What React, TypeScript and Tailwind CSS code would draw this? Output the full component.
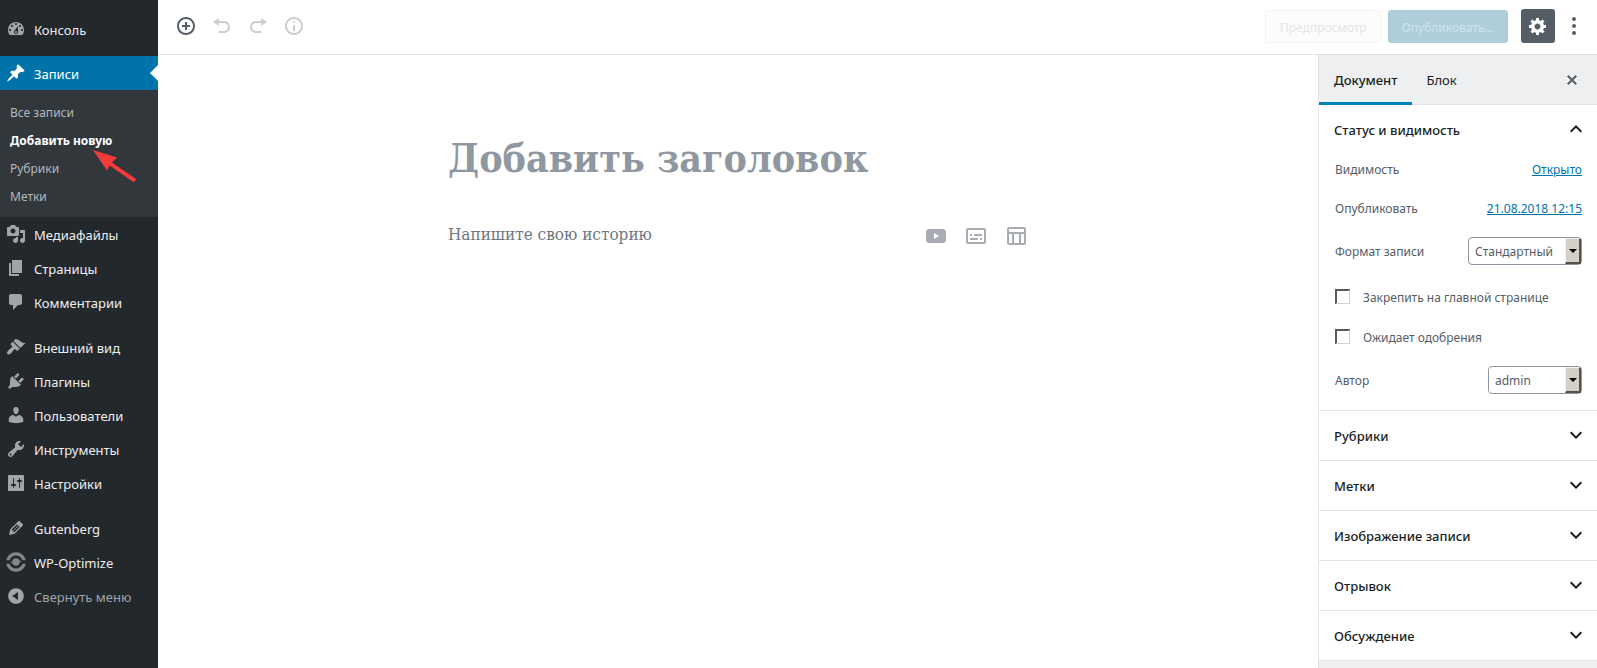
import type { ReactNode } from "react";

type IconProps = { d: string; className?: string; box?: number };

function Icon({ d, className = "size-5", box = 20 }: IconProps) {
  return (
    <svg viewBox={`0 0 ${box} ${box}`} className={`shrink-0 ${className}`} fill="currentColor" fillRule="evenodd" aria-hidden="true">
      <path d={d} />
    </svg>
  );
}

const icons = {
  dashboard:
    "M3.76 16h12.48c1.1-1.37 1.76-3.11 1.76-5 0-4.42-3.58-8-8-8s-8 3.58-8 8c0 1.89.66 3.63 1.76 5zM10 4c.55 0 1 .45 1 1s-.45 1-1 1-1-.45-1-1 .45-1 1-1zM6 6c.55 0 1 .45 1 1s-.45 1-1 1-1-.45-1-1 .45-1 1-1zm8 0c.55 0 1 .45 1 1s-.45 1-1 1-1-.45-1-1 .45-1 1-1zm-5.37 5.55L12 7v6c0 1.1-.9 2-2 2s-2-.9-2-2c0-.57.24-1.08.63-1.45zM4 10c.55 0 1 .45 1 1s-.45 1-1 1-1-.45-1-1 .45-1 1-1zm12 0c.55 0 1 .45 1 1s-.45 1-1 1-1-.45-1-1 .45-1 1-1zm-5 3c0-.55-.45-1-1-1s-1 .45-1 1 .45 1 1 1 1-.45 1-1z",
  post: "M10.44 3.02l1.82-1.82 6.36 6.35-1.83 1.82c-1.05-.68-2.48-.57-3.41.36l-.75.75c-.92.93-1.04 2.35-.35 3.41l-1.83 1.82-2.41-2.41-2.8 2.79c-.42.42-3.38 2.71-3.8 2.29s1.86-3.39 2.28-3.81l2.79-2.79L4.1 9.36l1.83-1.82c1.05.69 2.48.57 3.4-.36l.75-.75c.93-.92 1.05-2.35.36-3.41z",
  media:
    "M13 11V4c0-.55-.45-1-1-1h-1.67L9 1H5L3.67 3H2c-.55 0-1 .45-1 1v7c0 .55.45 1 1 1h10c.55 0 1-.45 1-1zM7 4.5c1.38 0 2.5 1.12 2.5 2.5S8.38 9.5 7 9.5 4.5 8.38 4.5 7 5.62 4.5 7 4.5zM14 6h5v10.5c0 1.38-1.12 2.5-2.5 2.5S14 17.88 14 16.5s1.12-2.5 2.5-2.5c.17 0 .34.02.5.05V9h-3V6zm-4 8.05V13h2v3.5c0 1.38-1.12 2.5-2.5 2.5S7 17.88 7 16.5 8.12 14 9.5 14c.17 0 .34.02.5.05z",
  page: "M6 15V2h10v13H6zm-1 1h8v2H3V5h2v11z",
  comments: "M5 2h9c1.1 0 2 .9 2 2v7c0 1.1-.9 2-2 2h-2l-5 5v-5H5c-1.1 0-2-.9-2-2V4c0-1.1.9-2 2-2z",
  appearance:
    "M14.48 11.06L7.41 3.99l1.5-1.5c.5-.56 2.3-.47 3.51.32 1.21.8 1.43 1.28 2.91 2.1 1.18.64 2.45 1.26 4.45.85zm-.71.71L6.7 4.7 4.93 6.47c-.39.39-.39 1.02 0 1.41l1.06 1.06c.39.39.39 1.03 0 1.42-.6.6-1.43 1.11-2.21 1.69-.35.26-.7.53-1.01.84C1.43 14.23.4 16.08 1.4 17.07c.99 1 2.84-.03 4.18-1.36.31-.31.58-.66.85-1.02.57-.78 1.08-1.61 1.69-2.21.39-.39 1.02-.39 1.41 0l1.06 1.06c.39.39 1.02.39 1.41 0z",
  plugins:
    "M13.11 4.36L9.87 7.6 8 5.73l3.24-3.24c.35-.34 1.05-.2 1.56.32.52.51.66 1.21.31 1.55zm-8 1.77l.91-1.12 9.01 9.01-1.19.84c-.71.71-2.63 1.16-3.82 1.16H6.14L4.9 17.26c-.59.59-1.54.59-2.12 0-.59-.58-.59-1.53 0-2.12l1.24-1.24v-3.88c0-1.13.4-3.19 1.09-3.89zm7.26 3.97l3.24-3.24c.34-.35 1.04-.21 1.55.31.52.51.66 1.21.31 1.55l-3.24 3.25z",
  users:
    "M10 9.25c-2.27 0-2.73-3.44-2.73-3.44C7 4.02 7.82 2 9.97 2c2.16 0 2.98 2.02 2.71 3.81 0 0-.41 3.44-2.68 3.44zm0 2.57L12.72 10c2.39 0 4.52 2.33 4.52 4.53v2.49s-3.65 1.13-7.24 1.13c-3.65 0-7.24-1.13-7.24-1.13v-2.49c0-2.25 1.94-4.48 4.47-4.48z",
  tools:
    "M16.68 9.77c-1.34 1.34-3.3 1.67-4.95.99l-5.41 6.52c-.99.99-2.59.99-3.58 0s-.99-2.59 0-3.57l6.52-5.42c-.68-1.65-.35-3.61.99-4.95 1.28-1.28 3.12-1.62 4.72-1.06l-2.89 2.89 2.82 2.82 2.86-2.87c.53 1.58.18 3.39-1.08 4.65zM3.81 16.21c.4.39 1.04.39 1.43 0 .4-.4.4-1.04 0-1.43-.39-.4-1.03-.4-1.43 0-.39.39-.39 1.03 0 1.43z",
  settings:
    "M18 17V3c0-.55-.45-1-1-1H3c-.55 0-1 .45-1 1v14c0 .55.45 1 1 1h14c.55 0 1-.45 1-1zM8 11h1c.55 0 1 .45 1 1s-.45 1-1 1H8v1.5c0 .28-.22.5-.5.5s-.5-.22-.5-.5V13H6c-.55 0-1-.45-1-1s.45-1 1-1h1V5.5c0-.28.22-.5.5-.5s.5.22.5.5V11zm5-2h-1c-.55 0-1-.45-1-1s.45-1 1-1h1V5.5c0-.28.22-.5.5-.5s.5.22.5.5V7h1c.55 0 1 .45 1 1s-.45 1-1 1h-1v5.5c0 .28-.22.5-.5.5s-.5-.22-.5-.5V9z",
  edit: "M13.89 3.39l2.71 2.72c.46.46.42 1.24.03 1.64l-8.01 8.02-5.56 1.16 1.16-5.58s7.6-7.63 7.99-8.03c.39-.39 1.22-.39 1.68.07zm-2.73 2.79l-5.59 5.61 1.11 1.11 5.54-5.65zm-2.97 8.23l5.58-5.6-1.07-1.08-5.59 5.6z",
  collapse:
    "M10 2.16c4.33 0 7.84 3.51 7.84 7.84s-3.51 7.84-7.84 7.84S2.16 14.33 2.16 10 5.71 2.16 10 2.16zm2 11.72V6.12L6.18 9.97z",
  insert:
    "M10 1c-5 0-9 4-9 9s4 9 9 9 9-4 9-9-4-9-9-9zm0 16c-3.9 0-7-3.1-7-7s3.1-7 7-7 7 3.1 7 7-3.1 7-7 7zm1-11H9v3H6v2h3v3h2v-3h3V9h-3V6z",
  undo: "M12 5H7V2L1 6l6 4V7h5c2.2 0 4 1.8 4 4s-1.8 4-4 4H7v2h5c3.3 0 6-2.7 6-6s-2.7-6-6-6z",
  redo: "M8 5h5V2l6 4-6 4V7H8c-2.2 0-4 1.8-4 4s1.8 4 4 4h5v2H8c-3.3 0-6-2.7-6-6s2.7-6 6-6z",
  info: "M9 15h2V9H9v6zm1-10c-.5 0-1 .5-1 1s.5 1 1 1 1-.5 1-1-.5-1-1-1zm0-4c-5 0-9 4-9 9s4 9 9 9 9-4 9-9-4-9-9-9zm0 16c-3.9 0-7-3.1-7-7s3.1-7 7-7 7 3.1 7 7-3.1 7-7 7z",
  gear: "M18 12h-2.18c-.17.7-.44 1.35-.81 1.93l1.54 1.54-2.1 2.1-1.54-1.54c-.58.36-1.23.63-1.91.79V19H8v-2.18c-.68-.16-1.33-.43-1.91-.79l-1.54 1.54-2.12-2.12 1.54-1.54c-.36-.58-.63-1.23-.79-1.91H1V9.03h2.17c.16-.7.44-1.35.8-1.94L2.43 5.55l2.1-2.1 1.54 1.54c.58-.37 1.24-.64 1.93-.81V2h3v2.18c.68.16 1.33.43 1.91.79l1.54-1.54 2.12 2.12-1.54 1.54c.36.59.64 1.24.8 1.94H18V12zm-8.5 1.5c1.66 0 3-1.34 3-3s-1.34-3-3-3-3 1.34-3 3 1.34 3 3 3z",
  dots: "M10 1a2 2 0 1 1 0 4 2 2 0 0 1 0-4zM10 8a2 2 0 1 1 0 4 2 2 0 0 1 0-4zM10 15a2 2 0 1 1 0 4 2 2 0 0 1 0-4z",
  close:
    "M14.95 6.46L11.41 10l3.54 3.54-1.41 1.41L10 11.42l-3.53 3.53-1.42-1.42L8.58 10 5.05 6.47l1.42-1.42L10 8.58l3.54-3.53z",
  chevronDown: "M7.41 8.59L12 13.17l4.59-4.58L18 10l-6 6-6-6z",
  chevronUp: "M12 8l-6 6 1.41 1.41L12 10.83l4.59 4.58L18 14z",
  video: "M6 5h12c3.100 0 4 .9 4 4v6c0 3.100-.9 4-4 4H6c-3.100 0-4-.9-4-4V9c0-3.100.9-4 4-4zm4 4v6l5-3z",
  subtitles:
    "M4 4h16c1.1 0 2 .9 2 2v12c0 1.1-.9 2-2 2H4c-1.1 0-2-.9-2-2V6c0-1.1.9-2 2-2zm0 2v12h16V6zM6 10h2v2H6zm4 0h8v2h-8zM6 14h8v2H6zm10 0h2v2h-2z",
  table:
    "M5 3h15c1.1 0 2 .9 2 2v14c0 1.1-.9 2-2 2H5c-1.1 0-2-.9-2-2V5c0-1.1.9-2 2-2zm0 2v3h15V5zm0 5v9h3v-9zm5 0v9h5v-9zm7 0v9h3v-9z",
};

function OptimizeIcon() {
  return (
    <svg viewBox="0 0 20 20" className="size-5 shrink-0 text-[#84888c]" fill="currentColor" aria-hidden="true">
      <path d="M.4 8.2C1.2 3.5 5.2.2 10 .2s8.800 3.300 9.600 8h-3C15.200 5.300 12.900 3.500 10 3.500S4.800 5.300 3.400 8.200z" />
      <path d="M.4 11.800C1.200 16.500 5.200 19.800 10 19.800s8.800-3.300 9.600-8h-3c-1.400 2.900-3.700 4.700-6.600 4.700s-5.200-1.800-6.600-4.700z" />
      <path d="M4 10.600c1.200-.2 1.900-.8 2.600-1.600v2.400zM16 9.400c-1.200.2-1.900.8-2.600 1.600V8.600z" />
      <circle cx="10" cy="10" r="3.7" />
    </svg>
  );
}

function MenuItem({ icon, label, active = false, muted = false }: { icon: ReactNode; label: string; active?: boolean; muted?: boolean }) {
  const tone = active
    ? "bg-[#0073aa] text-white"
    : muted
      ? "text-[#a0a5aa]"
      : "text-[#eeeeee]";
  return (
    <li className="relative">
      <a href="#" className={`flex h-[34px] items-center text-[13px] ${tone}`}>
        <span className={`flex w-[34px] pl-1.5 ${active ? "text-white" : "text-[#a0a5aa]"}`}>{icon}</span>
        <span className="pt-[3px]">{label}</span>
      </a>
      {active && (
        <span className="absolute top-1/2 right-0 size-0 -translate-y-1/2 border-y-8 border-r-8 border-y-transparent border-r-white" />
      )}
    </li>
  );
}

function AdminMenu() {
  const sub = ["Все записи", "Добавить новую", "Рубрики", "Метки"];
  return (
    <nav className="w-[158px] shrink-0 bg-[#23282d] pt-3">
      <ul>
        <MenuItem icon={<Icon d={icons.dashboard} />} label="Консоль" />
      </ul>
      <ul className="mt-2.5">
        <MenuItem icon={<Icon d={icons.post} />} label="Записи" active />
      </ul>
      <ul className="relative bg-[#32373c] pt-[9px] pb-1.5 pl-2.5 text-xs">
        {sub.map((s, i) => (
          <li key={s}>
            <a href="#" className={`flex h-7 items-center ${i === 1 ? "font-bold text-white" : "text-[#b4b9be]"}`}>
              {s}
            </a>
          </li>
        ))}
        <svg viewBox="0 0 44 34" className="absolute top-[59px] left-[93px] h-[34px] w-11" aria-hidden="true">
          <path d="M0 1L24 8.5 19 13.5 43 30 41 33.5 16.5 16.5 14 21.5z" fill="#f43a3a" />
        </svg>
      </ul>
      <ul>
        <MenuItem icon={<Icon d={icons.media} />} label="Медиафайлы" />
        <MenuItem icon={<Icon d={icons.page} />} label="Страницы" />
        <MenuItem icon={<Icon d={icons.comments} />} label="Комментарии" />
      </ul>
      <ul className="mt-[11px]">
        <MenuItem icon={<Icon d={icons.appearance} />} label="Внешний вид" />
        <MenuItem icon={<Icon d={icons.plugins} />} label="Плагины" />
        <MenuItem icon={<Icon d={icons.users} />} label="Пользователи" />
        <MenuItem icon={<Icon d={icons.tools} />} label="Инструменты" />
        <MenuItem icon={<Icon d={icons.settings} />} label="Настройки" />
      </ul>
      <ul className="mt-[11px]">
        <MenuItem icon={<Icon d={icons.edit} />} label="Gutenberg" />
        <MenuItem icon={<OptimizeIcon />} label="WP-Optimize" />
        <MenuItem icon={<Icon d={icons.collapse} />} label="Свернуть меню" muted />
      </ul>
    </nav>
  );
}

function Toolbar() {
  return (
    <header className="flex h-[55px] items-center border-b border-[#e2e4e7] pr-[13px] pb-0.5 pl-[18px]">
      <div className="flex gap-4 text-[#cbcdce]">
        <button aria-label="Добавить блок" className="text-[#555d66]">
          <Icon d={icons.insert} />
        </button>
        <button aria-label="Отменить">
          <Icon d={icons.undo} />
        </button>
        <button aria-label="Повторить">
          <Icon d={icons.redo} />
        </button>
        <button aria-label="Структура содержимого">
          <Icon d={icons.info} />
        </button>
      </div>
      <div className="ml-auto flex items-center">
        <button disabled className="h-[33px] rounded-[3px] border border-[#f3f3f3] bg-[#fcfcfc] px-3.5 pt-1 text-xs text-[#e3e4e5]">
          Предпросмотр
        </button>
        <button disabled className="ml-1.5 h-[33px] rounded-[3px] bg-[#b0ced9] px-3.5 pt-1 text-xs text-[#cbe5f0]">
          Опубликовать…
        </button>
        <button aria-label="Настройки" className="ml-[13px] flex size-[34px] items-center justify-center rounded-[3px] bg-[#555d66] text-white">
          <Icon d={icons.gear} />
        </button>
        <button aria-label="Ещё" className="ml-[9px] text-[#555d66]">
          <Icon d={icons.dots} />
        </button>
      </div>
    </header>
  );
}

function Editor() {
  return (
    <main className="flex-1 px-8">
      <div className="mx-auto max-w-[580px] pt-[75px] font-['DejaVu_Serif_Condensed','DejaVu_Serif',serif]">
        <h1 className="text-[39px] leading-[56px] font-bold text-[#8f98a1]">Добавить заголовок</h1>
        <div className="mt-[34px] flex items-center justify-between">
          <p className="pb-1 text-[17px] leading-7 text-[#6c7781]">Напишите свою историю</p>
          <div className="flex gap-4 text-[#a9adb3]">
            <button aria-label="Видео">
              <Icon d={icons.video} box={24} className="size-6" />
            </button>
            <button aria-label="Субтитры">
              <Icon d={icons.subtitles} box={24} className="size-6" />
            </button>
            <button aria-label="Таблица">
              <Icon d={icons.table} box={24} className="size-6" />
            </button>
          </div>
        </div>
      </div>
    </main>
  );
}

function PanelTitle({ label, open = false }: { label: string; open?: boolean }) {
  return (
    <h2>
      <button className="flex h-[49px] w-full items-center justify-between pr-[9px] pl-[15px] text-[13px] font-medium text-[#191e23]">
        <span className="pt-0.5">{label}</span>
        <Icon d={open ? icons.chevronUp : icons.chevronDown} box={24} className="mb-0.5 size-6" />
      </button>
    </h2>
  );
}

function SelectRow({ id, label, value, width }: { id: string; label: string; value: string; width: string }) {
  return (
    <div className="flex h-7 items-center justify-between">
      <label htmlFor={id} className="pt-0.5">{label}</label>
      <span className={`relative ${width}`}>
        <select
          id={id}
          className="h-7 w-full appearance-none rounded-[4px] border border-[#8d96a0] bg-white pt-0.5 pl-1.5 text-xs text-[#555d66]"
        >
          <option>{value}</option>
        </select>
        <span className="pointer-events-none absolute inset-y-px right-px flex w-4 items-center justify-center border-t border-r-2 border-b-2 border-l border-t-[#f4f2ee] border-r-[#55524e] border-b-[#55524e] border-l-[#f4f2ee] bg-[#d4d0c8]">
          <span className="size-0 border-x-4 border-t-4 border-x-transparent border-t-black" />
        </span>
      </span>
    </div>
  );
}

function CheckRow({ id, label }: { id: string; label: string }) {
  return (
    <div className="flex h-6 items-center gap-[13px]">
      <input
        id={id}
        type="checkbox"
        className="mb-0.5 size-[15px] appearance-none border-t-2 border-r border-b border-l-2 border-t-[#5a5a5a] border-r-[#d4d0c8] border-b-[#d4d0c8] border-l-[#5a5a5a] bg-white"
      />
      <label htmlFor={id} className="pt-0.5">{label}</label>
    </div>
  );
}

function SettingsPanel() {
  return (
    <aside className="w-[279px] shrink-0 border-l border-[#e2e4e7] bg-[#edeff0]">
      <div className="flex h-[50px] border-b border-[#e2e4e7] text-[13px] text-[#191e23]">
        <button className="-mb-px border-b-[3px] border-[#0085ba] px-[15px] pt-[5px] font-medium">Документ</button>
        <button className="px-3.5 pt-0.5">Блок</button>
        <button aria-label="Закрыть" className="mr-[15px] ml-auto text-[#555d66]">
          <Icon d={icons.close} />
        </button>
      </div>
      <section className="border-b border-[#e2e4e7] bg-white">
        <PanelTitle label="Статус и видимость" open />
        <div className="flex flex-col pr-[15px] pb-4 pl-4 text-xs text-[#555d66]">
          <div className="flex h-8 items-center justify-between">
            <span>Видимость</span>
            <a href="#" className="text-[#0073aa] underline">Открыто</a>
          </div>
          <div className="mt-[7px] flex h-8 items-center justify-between">
            <span>Опубликовать</span>
            <a href="#" className="text-[#0073aa] underline">21.08.2018 12:15</a>
          </div>
          <div className="mt-3">
            <SelectRow id="format" label="Формат записи" value="Стандартный" width="w-[114px]" />
          </div>
          <div className="mt-5 flex flex-col gap-4">
            <CheckRow id="sticky" label="Закрепить на главной странице" />
            <CheckRow id="pending" label="Ожидает одобрения" />
          </div>
          <div className="mt-[17px]">
            <SelectRow id="author" label="Автор" value="admin" width="w-[94px]" />
          </div>
        </div>
      </section>
      {["Рубрики", "Метки", "Изображение записи", "Отрывок", "Обсуждение"].map((t) => (
        <section key={t} className="border-b border-[#e2e4e7] bg-white">
          <PanelTitle label={t} />
        </section>
      ))}
    </aside>
  );
}

export default function App() {
  return (
    <div className="flex min-h-screen bg-white font-['Noto_Sans','Open_Sans',sans-serif]">
      <AdminMenu />
      <div className="flex min-w-0 flex-1 flex-col">
        <Toolbar />
        <div className="flex flex-1">
          <Editor />
          <SettingsPanel />
        </div>
      </div>
    </div>
  );
}
